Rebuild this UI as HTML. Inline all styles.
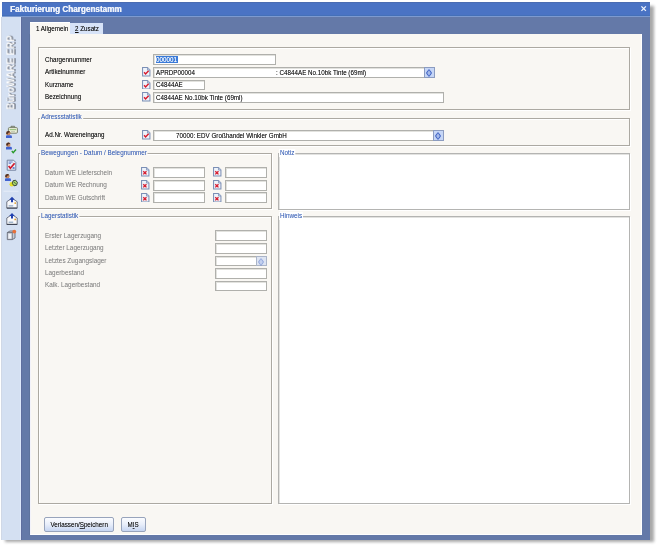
<!DOCTYPE html>
<html><head><meta charset="utf-8">
<style>
html,body{margin:0;padding:0;}
body{width:659px;height:548px;overflow:hidden;background:#fff;position:relative;font-family:"Liberation Sans",sans-serif;}
div{box-sizing:border-box;}
.a{position:absolute;}
.ttl{font-weight:bold;font-size:8.6px;color:#eef2fa;line-height:11px;white-space:nowrap;transform:scaleX(0.95);transform-origin:0 0;text-shadow:0.35px 0 0 #eef2fa;}
.tab{font-size:6.8px;color:#111;line-height:8px;white-space:nowrap;transform:scaleX(0.92);transform-origin:0 50%;text-shadow:0 0 0.5px rgba(0,0,0,0.45);}
.grp{border:1px solid #aca9a2;box-shadow:1px 1px 0 #fff, inset 1px 1px 0 #fff;}
.gt{font-size:6.6px;color:#4066b8;line-height:8px;padding:0 1px;background:#f9f7f3;white-space:nowrap;transform:scaleX(0.96);transform-origin:0 50%;text-shadow:0 0 0.5px rgba(60,100,190,0.35);margin-top:-0.6px;}
.lbl{font-size:6.8px;color:#151515;line-height:8px;white-space:nowrap;transform:scaleX(0.92);transform-origin:0 50%;text-shadow:0 0 0.5px rgba(0,0,0,0.45);}
.glbl{font-size:6.8px;color:#868686;line-height:8px;white-space:nowrap;transform:scaleX(0.94);transform-origin:0 50%;text-shadow:0 0 0.5px rgba(0,0,0,0.15);}
.inp{background:#fff;border:1px solid #b0b0ac;box-shadow:inset 1px 1px 0 #e2e2de;}
.txt{font-size:6.8px;color:#151515;line-height:8px;white-space:nowrap;transform:scaleX(0.92);transform-origin:0 50%;text-shadow:0 0 0.5px rgba(0,0,0,0.45);}
.sel{background:#3a7ad8;color:#fff;padding:0;text-shadow:0 0 0.4px rgba(255,255,255,0.5);display:inline-block;line-height:6.6px;height:6.6px;vertical-align:top;margin-top:0.9px;}
.btn{border:1px solid #98a4bc;border-radius:2px;background:linear-gradient(#fbfcff,#e8eefa 50%,#c6d5f2);text-align:center;line-height:9.6px;white-space:nowrap;}
.btn u{text-decoration-color:rgba(0,0,0,0.5);}
.btn span{display:inline-block;position:relative;top:-0.9px;font-size:6.8px;color:#151515;transform:scaleX(0.92);text-shadow:0 0 0.5px rgba(0,0,0,0.45);}
.cbb{background:#c6d6f6;border:1px solid #8c9cc0;}
.cbb.dis{background:#dde4f2;border-color:#aab4c8;}
.cbb.dis .arr{opacity:0.45;}
.arr{position:absolute;left:1.4px;top:1.4px;}
.side-t{font-weight:bold;font-size:10.8px;color:#f4f6fa;line-height:11px;white-space:nowrap;transform:rotate(-90deg) scaleX(0.895);transform-origin:center center;width:90px;text-align:center;text-shadow:0 0.9px 0 #4a5262, 0.3px 1.3px 0.4px rgba(60,66,80,0.6);color:#ffffff;will-change:transform;}

</style></head><body>
<div class="a " style="left:5px;top:6px;width:649px;height:536px;background:#7a7a7a;filter:blur(1.6px);opacity:0.65"></div>
<div class="a " style="left:2px;top:2px;width:648px;height:537.5px;background:#6479a8"></div>
<div class="a " style="left:2px;top:2px;width:648px;height:14px;background:#4a73c4;border-top:1px solid #4a6cb2;border-bottom:1px solid #4470b8"></div>
<div class="a ttl" style="left:10px;top:3.6px">Fakturierung Chargenstamm</div>
<div class="a " style="left:2px;top:16px;width:648px;height:1px;background:#7d9ad0"></div>
<svg class="a" style="left:640px;top:5px" width="7" height="7"><path d="M1.4 1.4L5.9 5.9M5.9 1.4L1.4 5.9" stroke="#f0f4fc" stroke-width="1.3"/></svg>
<div class="a " style="left:1.2px;top:17px;width:19.8px;height:522.6px;background:#d4e0f2;border-right:1px solid #dde7fb;border-left:1px solid #d0d8e6"></div>
<div class="a side-t" style="left:-33.6px;top:67.2px;">B&#252;roWARE ERP</div>
<svg class="a" style="left:0;top:0" width="22" height="250" viewBox="0 0 22 250"><path d="M11 127.6V126.3H14.6V127.6" fill="none" stroke="#6a7058" stroke-width="0.9"/><rect x="8.4" y="127.6" width="9" height="5.6" rx="1" fill="#eef2dc" stroke="#6e7460" stroke-width="0.9"/><path d="M9.6 129.7H16.2" stroke="#7ab060" stroke-width="0.9"/><path d="M11 131.5H15" stroke="#b0b4a0" stroke-width="0.6"/><circle cx="8.3" cy="133.2" r="2.2" fill="#c88860"/><path d="M6.1 133.6Q6.2 130.8 8.6 131.05Q10.2 131.3 10.4 132.4Q8.4 131.9 7.2 134.6Z" fill="#4a3026"/><path d="M6 135.8Q6.2 135.2 7.5 135.3H10.5Q11.9 135.3 11.9 136.4V137.9H6Z" fill="#3f62d0"/><circle cx="8.3" cy="144.7" r="2.2" fill="#c88860"/><path d="M6.1 145.1Q6.2 142.3 8.6 142.55Q10.2 142.8 10.4 143.9Q8.4 143.4 7.2 146.1Z" fill="#4a3026"/><path d="M6 147.3Q6.2 146.7 7.5 146.8H10.5Q11.9 146.8 11.9 147.9V149.4H6Z" fill="#3f62d0"/><path d="M11.8 151L13.2 152.6L16 149.5" fill="none" stroke="#2a9a2a" stroke-width="1.4"/><path d="M7.2 160.2H13.6L15.8 162.4V170.2H7.2Z" fill="#e8eef8" stroke="#70809e" stroke-width="1"/><path d="M8.6 162H12.6M8.6 163.3H11" stroke="#4a6ac0" stroke-width="0.8"/><path d="M8.6 166L10.4 168.2L14.6 163.2" fill="none" stroke="#d01a2a" stroke-width="1.7"/><rect x="12.6" y="167" width="2" height="2" fill="#6a8ad0"/><circle cx="7.3" cy="176.2" r="2.2" fill="#c88860"/><path d="M5.1 176.6Q5.2 173.8 7.6 174.05Q9.2 174.3 9.4 175.4Q7.4 174.9 6.2 177.6Z" fill="#4a3026"/><path d="M5 178.8Q5.2 178.2 6.5 178.3H9.5Q10.9 178.3 10.9 179.4V180.9H5Z" fill="#3f62d0"/><circle cx="11.8" cy="184.3" r="2.3" fill="#e4e028"/><path d="M13 180.8L15.6 180.2L17.4 182.4L16.6 185.2L14 185.8L12.4 183.6Z" fill="#a8d070" stroke="#2a3a2a" stroke-width="0.9"/><path d="M14 182.2L15.8 183.6" stroke="#3a6a30" stroke-width="0.8"/><path d="M3.5 191.2H18.5" stroke="#e6edf8" stroke-width="1"/><path d="M6.8 201.7L12 198.3L17.2 201.7V208.1H6.8Z" fill="#f8f8fa" stroke="#626878" stroke-width="0.9"/><path d="M6.8 208.1H17.2" stroke="#3a4050" stroke-width="1"/><path d="M12 196.7L14.8 199.7H13V202.3H11V199.7H9.2Z" fill="#2040b0"/><path d="M8.6 205.9H13.2" stroke="#7a98b8" stroke-width="1"/><circle cx="15.2" cy="203.1" r="0.9" fill="#e0a030"/><path d="M6.8 218.0L12 214.60000000000002L17.2 218.0V224.4H6.8Z" fill="#f8f8fa" stroke="#626878" stroke-width="0.9"/><path d="M6.8 224.4H17.2" stroke="#3a4050" stroke-width="1"/><path d="M12 213.0L14.8 216.0H13V218.60000000000002H11V216.0H9.2Z" fill="#2040b0"/><path d="M8.6 222.20000000000002H13.2" stroke="#7a98b8" stroke-width="1"/><circle cx="15.2" cy="219.4" r="0.9" fill="#e0a030"/><path d="M7.3 232.5L10 231H15V238L12.3 239.6H7.3Z" fill="#c8ccd6" stroke="#6a6e7a" stroke-width="0.9"/><path d="M7.3 232.5H12.3V239.6M12.3 232.5L15 231" fill="none" stroke="#5a5e6a" stroke-width="0.7"/><path d="M8.5 234H11.3V238.5H8.5Z" fill="#f0f2f6"/><circle cx="14.3" cy="231.6" r="1.9" fill="#e8703a"/></svg>
<div class="a " style="left:21px;top:17px;width:1px;height:522.5px;background:#5f6e9e"></div>
<div class="a " style="left:29px;top:34px;width:1px;height:501px;background:#5e739e"></div>
<div class="a " style="left:29.5px;top:34px;width:612.5px;height:501px;background:#f9f7f3;border-right:1px solid #fff;border-bottom:1px solid #fff;border-left:1px solid #f2f2fa"></div>
<div class="a " style="left:30px;top:22px;width:40px;height:13px;background:#f9f7f3;border-top:1px solid #fff"></div>
<div class="a " style="left:70px;top:23px;width:33px;height:11px;background:#d7e3f8"></div>
<div class="a tab" style="left:36px;top:25.40px;">1 Allgemein</div>
<div class="a tab" style="left:75px;top:25.40px;"><u>2</u> Zusatz</div>
<div class="a grp" style="left:38px;top:47px;width:592px;height:62.5px;"></div>
<div class="a lbl" style="left:45px;top:55.90px;">Chargennummer</div>
<div class="a lbl" style="left:45px;top:68.40px;">Artikelnummer</div>
<div class="a lbl" style="left:45px;top:80.90px;">Kurzname</div>
<div class="a lbl" style="left:45px;top:93.40px;">Bezeichnung</div>
<div class="a inp" style="left:153px;top:54px;width:123px;height:11px;"></div>
<div class="a " style="left:155.5px;top:56px;width:22.3px;height:6.8px;background:#3a7ad8"></div>
<div class="a txt" style="left:155.6px;top:55.90px;color:#fff;text-shadow:0 0 0.4px rgba(255,255,255,0.6)">000001</div>
<div class="a " style="left:142.3px;top:67.3px;width:8.5px;height:9.5px;"><svg width="8.5" height="9.5" viewBox="0 0 9 10" style="position:absolute;left:0;top:0"><path d="M0.6 0.6H5.8L8.4 3.2V9.4H0.6Z" fill="#eef3fb" stroke="#7b8fb5" stroke-width="1.1"/><path d="M5.8 0.6V3.2H8.4" fill="#c8d4ea" stroke="#7b8fb5" stroke-width="0.8"/><path d="M2.2 5.6L3.8 7.4L7 4" fill="none" stroke="#d8192b" stroke-width="1.5"/></svg></div>
<div class="a inp" style="left:153px;top:66.5px;width:282px;height:11.0px;"><div class="txt" style="position:absolute;left:1.5px;top:1.00px;">APRDP00004<span style="position:absolute;left:130.5px">: C4844AE No.10bk Tinte (69ml)</span></div><div class="cbb" style="position:absolute;right:-1px;top:-1px;bottom:-1px;width:11px;"><svg class="arr" width="6" height="8" viewBox="0 0 6 8"><path d="M3 0.6L5.2 3.2V4.8L3 7.4L0.8 4.8V3.2Z" fill="#8aa4e0" stroke="#3f62c4" stroke-width="1"/><path d="M3 2.6V5.4" stroke="#c8d6f6" stroke-width="0.9"/></svg></div></div>
<div class="a " style="left:142.3px;top:79.8px;width:8.5px;height:9.5px;"><svg width="8.5" height="9.5" viewBox="0 0 9 10" style="position:absolute;left:0;top:0"><path d="M0.6 0.6H5.8L8.4 3.2V9.4H0.6Z" fill="#eef3fb" stroke="#7b8fb5" stroke-width="1.1"/><path d="M5.8 0.6V3.2H8.4" fill="#c8d4ea" stroke="#7b8fb5" stroke-width="0.8"/><path d="M2.2 5.6L3.8 7.4L7 4" fill="none" stroke="#d8192b" stroke-width="1.5"/></svg></div>
<div class="a inp" style="left:153px;top:79.5px;width:52px;height:10.5px;"><div class="txt" style="position:absolute;left:1.5px;top:0.75px;">C4844AE</div></div>
<div class="a " style="left:142.3px;top:92.3px;width:8.5px;height:9.5px;"><svg width="8.5" height="9.5" viewBox="0 0 9 10" style="position:absolute;left:0;top:0"><path d="M0.6 0.6H5.8L8.4 3.2V9.4H0.6Z" fill="#eef3fb" stroke="#7b8fb5" stroke-width="1.1"/><path d="M5.8 0.6V3.2H8.4" fill="#c8d4ea" stroke="#7b8fb5" stroke-width="0.8"/><path d="M2.2 5.6L3.8 7.4L7 4" fill="none" stroke="#d8192b" stroke-width="1.5"/></svg></div>
<div class="a inp" style="left:153px;top:92px;width:291px;height:11px;"><div class="txt" style="position:absolute;left:1.5px;top:1.00px;">C4844AE No.10bk Tinte (69ml)</div></div>
<div class="a grp" style="left:38px;top:118px;width:592px;height:27.5px;"></div>
<div class="a gt" style="left:39.5px;top:113.90px;">Adressstatistik</div>
<div class="a lbl" style="left:45px;top:131.40px;">Ad.Nr. Wareneingang</div>
<div class="a " style="left:142.3px;top:130.3px;width:8.5px;height:9.5px;"><svg width="8.5" height="9.5" viewBox="0 0 9 10" style="position:absolute;left:0;top:0"><path d="M0.6 0.6H5.8L8.4 3.2V9.4H0.6Z" fill="#eef3fb" stroke="#7b8fb5" stroke-width="1.1"/><path d="M5.8 0.6V3.2H8.4" fill="#c8d4ea" stroke="#7b8fb5" stroke-width="0.8"/><path d="M2.2 5.6L3.8 7.4L7 4" fill="none" stroke="#d8192b" stroke-width="1.5"/></svg></div>
<div class="a inp" style="left:153px;top:129.5px;width:291px;height:11.0px;"><div class="txt" style="position:absolute;left:1.5px;top:1.00px;left:21.5px">70000: EDV Gro&szlig;handel Winkler GmbH</div><div class="cbb" style="position:absolute;right:-1px;top:-1px;bottom:-1px;width:11px;"><svg class="arr" width="6" height="8" viewBox="0 0 6 8"><path d="M3 0.6L5.2 3.2V4.8L3 7.4L0.8 4.8V3.2Z" fill="#8aa4e0" stroke="#3f62c4" stroke-width="1"/><path d="M3 2.6V5.4" stroke="#c8d6f6" stroke-width="0.9"/></svg></div></div>
<div class="a grp" style="left:38px;top:153px;width:234px;height:56px;"></div>
<div class="a gt" style="left:39.5px;top:149.60px;">Bewegungen - Datum / Belegnummer</div>
<div class="a glbl" style="left:45px;top:169.00px;">Datum WE Lieferschein</div>
<div class="a " style="left:141.3px;top:167.3px;width:8.5px;height:9.5px;"><svg width="8.5" height="9.5" viewBox="0 0 9 10" style="position:absolute;left:0;top:0"><path d="M0.6 0.6H5.8L8.4 3.2V9.4H0.6Z" fill="#eef3fb" stroke="#7b8fb5" stroke-width="1.1"/><path d="M5.8 0.6V3.2H8.4" fill="#c8d4ea" stroke="#7b8fb5" stroke-width="0.8"/><path d="M2.4 4.4L5.8 7.8M5.8 4.4L2.4 7.8" fill="none" stroke="#d8192b" stroke-width="1.4"/></svg></div>
<div class="a inp" style="left:153px;top:167px;width:51.5px;height:10.5px;"></div>
<div class="a " style="left:213.3px;top:167.3px;width:8.5px;height:9.5px;"><svg width="8.5" height="9.5" viewBox="0 0 9 10" style="position:absolute;left:0;top:0"><path d="M0.6 0.6H5.8L8.4 3.2V9.4H0.6Z" fill="#eef3fb" stroke="#7b8fb5" stroke-width="1.1"/><path d="M5.8 0.6V3.2H8.4" fill="#c8d4ea" stroke="#7b8fb5" stroke-width="0.8"/><path d="M2.4 4.4L5.8 7.8M5.8 4.4L2.4 7.8" fill="none" stroke="#d8192b" stroke-width="1.4"/></svg></div>
<div class="a inp" style="left:225px;top:167px;width:42px;height:10.5px;"></div>
<div class="a glbl" style="left:45px;top:181.40px;">Datum WE Rechnung</div>
<div class="a " style="left:141.3px;top:180.3px;width:8.5px;height:9.5px;"><svg width="8.5" height="9.5" viewBox="0 0 9 10" style="position:absolute;left:0;top:0"><path d="M0.6 0.6H5.8L8.4 3.2V9.4H0.6Z" fill="#eef3fb" stroke="#7b8fb5" stroke-width="1.1"/><path d="M5.8 0.6V3.2H8.4" fill="#c8d4ea" stroke="#7b8fb5" stroke-width="0.8"/><path d="M2.4 4.4L5.8 7.8M5.8 4.4L2.4 7.8" fill="none" stroke="#d8192b" stroke-width="1.4"/></svg></div>
<div class="a inp" style="left:153px;top:180px;width:51.5px;height:10.5px;"></div>
<div class="a " style="left:213.3px;top:180.3px;width:8.5px;height:9.5px;"><svg width="8.5" height="9.5" viewBox="0 0 9 10" style="position:absolute;left:0;top:0"><path d="M0.6 0.6H5.8L8.4 3.2V9.4H0.6Z" fill="#eef3fb" stroke="#7b8fb5" stroke-width="1.1"/><path d="M5.8 0.6V3.2H8.4" fill="#c8d4ea" stroke="#7b8fb5" stroke-width="0.8"/><path d="M2.4 4.4L5.8 7.8M5.8 4.4L2.4 7.8" fill="none" stroke="#d8192b" stroke-width="1.4"/></svg></div>
<div class="a inp" style="left:225px;top:180px;width:42px;height:10.5px;"></div>
<div class="a glbl" style="left:45px;top:193.90px;">Datum WE Gutschrift</div>
<div class="a " style="left:141.3px;top:192.60000000000002px;width:8.5px;height:9.5px;"><svg width="8.5" height="9.5" viewBox="0 0 9 10" style="position:absolute;left:0;top:0"><path d="M0.6 0.6H5.8L8.4 3.2V9.4H0.6Z" fill="#eef3fb" stroke="#7b8fb5" stroke-width="1.1"/><path d="M5.8 0.6V3.2H8.4" fill="#c8d4ea" stroke="#7b8fb5" stroke-width="0.8"/><path d="M2.4 4.4L5.8 7.8M5.8 4.4L2.4 7.8" fill="none" stroke="#d8192b" stroke-width="1.4"/></svg></div>
<div class="a inp" style="left:153px;top:192.3px;width:51.5px;height:10.5px;"></div>
<div class="a " style="left:213.3px;top:192.60000000000002px;width:8.5px;height:9.5px;"><svg width="8.5" height="9.5" viewBox="0 0 9 10" style="position:absolute;left:0;top:0"><path d="M0.6 0.6H5.8L8.4 3.2V9.4H0.6Z" fill="#eef3fb" stroke="#7b8fb5" stroke-width="1.1"/><path d="M5.8 0.6V3.2H8.4" fill="#c8d4ea" stroke="#7b8fb5" stroke-width="0.8"/><path d="M2.4 4.4L5.8 7.8M5.8 4.4L2.4 7.8" fill="none" stroke="#d8192b" stroke-width="1.4"/></svg></div>
<div class="a inp" style="left:225px;top:192.3px;width:42px;height:10.5px;"></div>
<div class="a grp" style="left:277.5px;top:153px;width:352.5px;height:56.599999999999994px;background:#fff;border-color:#b4b4b2;box-shadow:1px 1px 0 #fff, inset 1px 1px 0 #e2e2e0;"></div>
<div class="a gt" style="left:279px;top:149.60px;background:#fff">Notiz</div>
<div class="a grp" style="left:38px;top:216px;width:234px;height:288px;"></div>
<div class="a gt" style="left:39.5px;top:212.90px;">Lagerstatistik</div>
<div class="a glbl" style="left:45px;top:231.70px;">Erster Lagerzugang</div>
<div class="a inp" style="left:215.3px;top:230.2px;width:51.69999999999999px;height:10.5px;"></div>
<div class="a glbl" style="left:45px;top:243.90px;">Letzter Lagerzugang</div>
<div class="a inp" style="left:215.3px;top:243px;width:51.69999999999999px;height:10.5px;"></div>
<div class="a glbl" style="left:45px;top:256.90px;">Letztes Zugangslager</div>
<div class="a inp" style="left:215.3px;top:255.5px;width:51.69999999999999px;height:10.5px;"><div class="cbb dis" style="position:absolute;right:-1px;top:-1px;bottom:-1px;width:11px;"><svg class="arr" width="6" height="8" viewBox="0 0 6 8"><path d="M3 0.6L5.2 3.2V4.8L3 7.4L0.8 4.8V3.2Z" fill="#8aa4e0" stroke="#3f62c4" stroke-width="1"/><path d="M3 2.6V5.4" stroke="#c8d6f6" stroke-width="0.9"/></svg></div></div>
<div class="a glbl" style="left:45px;top:269.00px;">Lagerbestand</div>
<div class="a inp" style="left:215.3px;top:268.2px;width:51.69999999999999px;height:10.5px;"></div>
<div class="a glbl" style="left:45px;top:281.40px;">Kalk. Lagerbestand</div>
<div class="a inp" style="left:215.3px;top:280.7px;width:51.69999999999999px;height:10.5px;"></div>
<div class="a grp" style="left:277.5px;top:216px;width:352.5px;height:288px;background:#fff;border-color:#b4b4b2;box-shadow:1px 1px 0 #fff, inset 1px 1px 0 #e2e2e0;"></div>
<div class="a gt" style="left:279px;top:212.90px;background:#fff">Hinweis</div>
<div class="a btn" style="left:44px;top:517px;width:70px;height:14.5px;"><span>Verlassen/<u>S</u>peichern</span></div>
<div class="a btn" style="left:121px;top:517px;width:25px;height:14.5px;"><span>M<u>I</u>S</span></div>
</body></html>
